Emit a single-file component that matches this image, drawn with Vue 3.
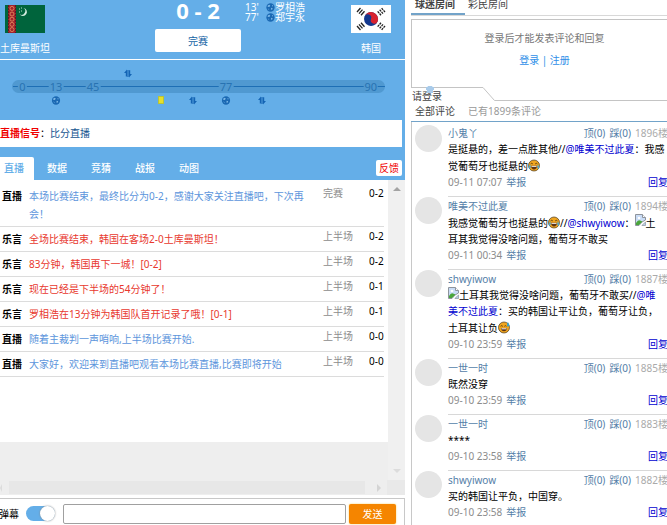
<script setup>
import { ref } from 'vue'

const danmaku = ref(true)
const message = ref('')

const scorers = [
  { minute: "13'", name: '罗相浩' },
  { minute: "77'", name: '郑宇永' }
]

// Positions are percentages along the match bar.
const marks = [
  { label: '0', at: 2.8 },
  { label: '13', at: 11.8 },
  { label: '45', at: 21.7 },
  { label: '77', at: 57.4 },
  { label: '90', at: 96.2 }
]
const events = [
  { type: 'sub', at: 31.1, side: 'above' },
  { type: 'goal', at: 11.9, side: 'below' },
  { type: 'card', at: 40, side: 'below' },
  { type: 'sub', at: 48.4, side: 'below' },
  { type: 'goal', at: 57.4, side: 'below' },
  { type: 'sub', at: 67, side: 'below' }
]

const tabs = ['直播', '数据', '竞猜', '战报', '动图']

const feed = [
  { who: '直播', text: '本场比赛结束，最终比分为0-2，感谢大家关注直播吧，下次再会！', phase: '完赛', score: '0-2', tone: 'blue' },
  { who: '乐言', text: '全场比赛结束，韩国在客场2-0土库曼斯坦！', phase: '上半场', score: '0-2', tone: 'red' },
  { who: '乐言', text: '83分钟，韩国再下一城！[0-2]', phase: '上半场', score: '0-2', tone: 'red' },
  { who: '乐言', text: '现在已经是下半场的54分钟了！', phase: '上半场', score: '0-1', tone: 'red' },
  { who: '乐言', text: '罗相浩在13分钟为韩国队首开记录了哦！[0-1]', phase: '上半场', score: '0-1', tone: 'red' },
  { who: '直播', text: '随着主裁判一声哨响,上半场比赛开始.', phase: '上半场', score: '0-0', tone: 'blue' },
  { who: '直播', text: '大家好，欢迎来到直播吧观看本场比赛直播,比赛即将开始', phase: '上半场', score: '0-0', tone: 'blue' }
]

const comments = [
  {
    user: '小鬼丫', floor: '1896楼', time: '09-11 07:07',
    lines: [
      [{ t: '是挺悬的，差一点胜其他//' }, { at: '@唯美不过此夏' }, { t: '：我感' }],
      [{ t: '觉葡萄牙也挺悬的' }, { icon: 'joy' }]
    ]
  },
  {
    user: '唯美不过此夏', floor: '1894楼', time: '09-11 00:34',
    lines: [
      [{ t: '我感觉葡萄牙也挺悬的' }, { icon: 'joy' }, { t: '//' }, { at: '@shwyiwow' }, { t: '：' }, { icon: 'broken' }, { t: '土' }],
      [{ t: '耳其我觉得没啥问题，葡萄牙不敢买' }]
    ]
  },
  {
    user: 'shwyiwow', floor: '1887楼', time: '09-10 23:59',
    lines: [
      [{ icon: 'broken' }, { t: '土耳其我觉得没啥问题，葡萄牙不敢买//' }, { at: '@唯' }],
      [{ at: '美不过此夏' }, { t: '：买的韩国让平让负，葡萄牙让负，' }],
      [{ t: '土耳其让负' }, { icon: 'sweat' }]
    ]
  },
  { user: '一世一时', floor: '1885楼', time: '09-10 23:59', lines: [[{ t: '既然没穿' }]] },
  { user: '一世一时', floor: '1883楼', time: '09-10 23:58', lines: [[{ t: '****' }]] },
  { user: 'shwyiwow', floor: '1882楼', time: '09-10 23:58', lines: [[{ t: '买的韩国让平负，中国穿。' }]] }
]
</script>

<template>
  <div class="page">
    <svg class="defs" aria-hidden="true">
      <symbol id="ball" viewBox="0 0 10 10">
        <circle cx="5" cy="5" r="4.6" fill="#1b69b3" />
        <path d="M2 2.8 3.8 2 4.8 3 3.6 4.4 1.8 4.2ZM6.6 2 8.2 3.4 7 4ZM5.8 5.2 7.4 5.8 6.8 7.4 5.4 7.2ZM2 6 3.2 6.6 3.6 8Z" fill="#7db9e8" />
      </symbol>
      <symbol id="swap" viewBox="0 0 8 9">
        <path d="M0 4 3 .6V7.6H1.8V4ZM8 5 5 8.4V1.2H6.2V5Z" fill="#1464b4" />
        <path d="M3.5 1V8M4.5 1V8" stroke="#1464b4" stroke-width=".6" />
      </symbol>
      <symbol id="joy" viewBox="0 0 12 12">
        <circle cx="6" cy="6" r="5.5" fill="#f0a51e" stroke="#4a3a20" stroke-width=".7" />
        <path d="M2.6 4.4Q3.6 3.2 4.8 4.4M7.2 4.4Q8.4 3.2 9.4 4.4" stroke="#3b2a15" stroke-width=".8" fill="none" />
        <path d="M3 6.2H9Q8.6 10 6 10 3.4 10 3 6.2Z" fill="#5b3316" />
        <path d="M3.5 6.4H8.5V7.3H3.5Z" fill="#fff" />
        <path d="M2.2 4.8Q.2 7 .8 9 2.4 9.8 2.8 7.6ZM9.8 4.8Q11.8 7 11.2 9 9.6 9.8 9.2 7.6Z" fill="#4ca5c8" />
      </symbol>
      <symbol id="sweat" viewBox="0 0 12 12">
        <circle cx="6" cy="6" r="5.5" fill="#f0a51e" stroke="#4a3a20" stroke-width=".7" />
        <path d="M2.6 4.8Q3.6 3.6 4.8 4.8M6.4 4.8Q7.6 3.6 8.4 4.8" stroke="#3b2a15" stroke-width=".8" fill="none" />
        <path d="M3 6.6H9Q8.6 9.8 6 9.8 3.4 9.8 3 6.6Z" fill="#5b3316" />
        <path d="M3.5 6.8H8.5V7.8H3.5Z" fill="#fff" />
        <path d="M9.8.6Q12 3.4 11.2 4.6 10 5.6 9 4.4 8.6 3 9.8.6Z" fill="#35a3c9" />
      </symbol>
      <symbol id="broken" viewBox="0 0 11 12">
        <path d="M.5.5H7.5L10.5 3.5V6L7 8 4 11.5H.5Z" fill="#c9dcf6" stroke="#8e949c" />
        <path d="M1 9Q3 5.5 5 6.5L7.4 7.6 4 11H1Z" fill="#4ba63b" />
        <circle cx="4" cy="4" r="1.3" fill="#fff" />
        <path d="M7.5.5V3.5H10.5" fill="#fff" stroke="#8e949c" />
        <path d="M10.5 8V11.5H6.8Z" fill="#b9cfe8" stroke="#8e949c" stroke-width=".7" />
      </symbol>
    </svg>

    <main class="match">
      <header class="scoreboard">
        <div class="team">
          <svg class="flag" viewBox="0 0 40 28" role="img" aria-label="土库曼斯坦">
            <rect width="40" height="28" fill="#00643c" />
            <rect x="3" width="8" height="28" fill="#a3222c" />
            <g fill="none" stroke="#e08a5a" stroke-width=".9">
              <circle cx="7" cy="3.4" r="2" /><circle cx="7" cy="9" r="2" /><circle cx="7" cy="14.2" r="2" />
              <circle cx="7" cy="19.4" r="2" /><circle cx="7" cy="24.6" r="2" />
            </g>
            <path d="M3.5 0V28M10.5 0V28" stroke="#5e1a20" stroke-dasharray="2 1" />
            <path d="M18.5 3A4 4 0 1 1 14.6 9.2 3.6 3.6 0 0 0 18.5 3Z" fill="#d8eee2" />
            <path d="M14 4h1M16 3h1M14 7h1M16 6h1" stroke="#b8dcc8" />
          </svg>
          <span>土库曼斯坦</span>
        </div>
        <div class="result">
          <strong>0 - 2</strong>
          <button type="button">完赛</button>
        </div>
        <ul class="scorers">
          <li v-for="s in scorers" :key="s.minute">
            <span class="minute">{{ s.minute }}</span>
            <svg class="mini"><use href="#ball" /></svg>{{ s.name }}
          </li>
        </ul>
        <div class="team">
          <svg class="flag" viewBox="0 0 40 28" role="img" aria-label="韩国">
            <rect width="40" height="28" fill="#fff" />
            <g transform="rotate(20 20 14)">
              <circle cx="20" cy="14" r="7" fill="#14388e" />
              <path d="M13 14A7 7 0 0 1 27 14 3.5 3.5 0 0 1 20 14 3.5 3.5 0 0 0 13 14Z" fill="#d8222f" />
            </g>
            <g stroke="#222" stroke-width="1.3">
              <path d="M6 7 9.5 3M8 8.6 11.5 4.6M10 10.2 13.5 6.2" />
              <path d="M34 7 30.5 3M32 8.6 28.5 4.6M30 10.2 26.5 6.2" stroke-dasharray="2.2 .7" />
              <path d="M6 21 9.5 25M8 19.4 11.5 23.4M10 17.8 13.5 21.8" />
              <path d="M34 21 30.5 25M32 19.4 28.5 23.4M30 17.8 26.5 21.8" stroke-dasharray="2.2 .7" />
            </g>
          </svg>
          <span>韩国</span>
        </div>
      </header>

      <section class="timeline" aria-label="比赛进程">
        <div class="track">
          <span v-for="m in marks" :key="m.label" class="mark" :style="{ left: m.at + '%' }">{{ m.label }}</span>
          <span v-for="e in events" :key="e.at" class="event" :class="[e.type, e.side]" :style="{ left: e.at + '%' }">
            <svg v-if="e.type === 'goal'"><use href="#ball" /></svg>
            <svg v-if="e.type === 'sub'"><use href="#swap" /></svg>
          </span>
        </div>
      </section>

      <p class="signal"><b>直播信号</b>：<a href="#">比分直播</a></p>

      <nav class="tabs">
        <a v-for="(tab, i) in tabs" :key="tab" href="#" :class="{ active: i === 0 }">{{ tab }}</a>
        <button type="button">反馈</button>
      </nav>

      <div class="feed">
        <ul>
          <li v-for="(row, i) in feed" :key="i">
            <b>{{ row.who }}</b>
            <span class="text" :class="row.tone">{{ row.text }}</span>
            <span class="phase">{{ row.phase }}</span>
            <span class="score">{{ row.score }}</span>
          </li>
        </ul>
        <div class="vbar"><i class="up"></i><i class="down"></i></div>
        <div class="blank"></div>
      </div>
      <div class="hbar"><i class="left"></i><span class="thumb"></span><i class="right"></i><span class="corner"></span></div>

      <form class="composer" @submit.prevent>
        <label for="danmaku">弹幕</label>
        <input id="danmaku" v-model="danmaku" type="checkbox" class="toggle" />
        <input v-model="message" type="text" class="message" aria-label="弹幕内容" />
        <button type="submit">发送</button>
      </form>
    </main>

    <aside class="room">
      <nav class="rooms">
        <a href="#" class="active">球迷房间</a>
        <a href="#">彩民房间</a>
      </nav>
      <div class="login">
        <p>登录后才能发表评论和回复</p>
        <p class="links"><a href="#">登录</a> | <a href="#">注册</a></p>
      </div>
      <div class="notch">
        <span class="please">请登录</span>
        <svg class="person" viewBox="0 0 8 8"><path d="M2 0H6L6.6 1H8V4H7V7H1V4H0V1H1.4Z" fill="#a9cbea" /></svg>
        <svg class="slope" viewBox="0 0 12 14"><path d="M0 .5 11.5 13.5H12" fill="none" stroke="#c4c4c4" /></svg>
        <span class="rest"></span>
      </div>
      <div class="filter"><b>全部评论</b><span>已有1899条评论</span></div>
      <div class="comments">
        <article v-for="(c, i) in comments" :key="i">
          <span class="avatar"></span>
          <div class="body">
            <div class="line">
              <a href="#" class="user">{{ c.user }}</a>
              <span class="votes"><a href="#">顶(0)</a><a href="#">踩(0)</a>{{ c.floor }}</span>
            </div>
            <p v-for="(line, n) in c.lines" :key="n">
              <template v-for="(p, k) in line" :key="k">
                <a v-if="p.at" href="#" class="mention">{{ p.at }}</a>
                <svg v-else-if="p.icon" :class="p.icon"><use :href="'#' + p.icon" /></svg>
                <template v-else>{{ p.t }}</template>
              </template>
            </p>
            <div class="line">
              <span class="time">{{ c.time }}<a href="#">举报</a></span>
              <a href="#" class="reply">回复</a>
            </div>
          </div>
        </article>
      </div>
    </aside>
  </div>
</template>

<style>
body {
  background: #fff;
}
</style>

<style scoped>
.page {
  display: grid;
  grid-template-columns: 405fr 256fr;
  column-gap: 6px;
  min-height: 100vh;
  overflow: hidden;
  font: 10px/16px "Noto Sans", "Noto Sans CJK SC", sans-serif;
  color: #000;
}
.page * {
  box-sizing: border-box;
}
.defs {
  position: absolute;
  width: 0;
  height: 0;
}
a {
  color: inherit;
  text-decoration: none;
}
p, ul {
  margin: 0;
  padding: 0;
  list-style: none;
}
button, input {
  font: inherit;
  margin: 0;
}
button {
  border: 0;
  padding: 0;
  cursor: pointer;
}
.match {
  display: flex;
  flex-direction: column;
  min-width: 0;
}

/* Scoreboard */
.scoreboard {
  display: grid;
  grid-template-columns: 50px 105fr 86px 96fr 68px;
  height: 60px;
  background: #64aee8;
  border-bottom: 1px solid #fff;
  color: #fff;
}
.team {
  display: flex;
  flex-direction: column;
  align-items: center;
  gap: 7px;
  padding-top: 5px;
  white-space: nowrap;
}
.team:last-child {
  grid-column: 5;
}
.flag {
  width: 40px;
  height: 28px;
}
.result {
  grid-column: 3;
  text-align: center;
}
.result strong {
  display: block;
  height: 29px;
  font: bold 22px/20px "Open Sans", "Noto Sans", sans-serif;
}
.result button {
  width: 100%;
  height: 23px;
  border-radius: 2px;
  background: #fff;
  color: #1464a5;
}
.scorers {
  grid-column: 4;
  padding: 2px 0 0 4px;
}
.scorers li {
  display: flex;
  align-items: center;
  height: 10px;
  line-height: 10px;
  white-space: nowrap;
}
.minute {
  width: 21px;
}
.mini {
  width: 9px;
  height: 9px;
}

/* Match bar */
.timeline {
  padding: 20px 20px 27px 12px;
  background: #64aee8;
}
.track {
  position: relative;
  height: 13px;
  border-radius: 7px;
  background: linear-gradient(#1e6fb5, #1e6fb5) 1px 6px / 100% 1px no-repeat #5099d1;
}
.mark, .event {
  position: absolute;
  transform: translateX(-50%);
}
.mark {
  top: 0;
  padding: 0 1px;
  background: #5099d1;
  color: #2873b2;
  font-size: 11px;
  line-height: 13px;
}
.event {
  display: flex;
}
.event svg {
  width: 9px;
  height: 9px;
}
.event.above {
  top: -11px;
}
.event.below {
  top: 16px;
}
.event.card {
  width: 6px;
  height: 8px;
  border: 1px solid #b9c438;
  background: #e6e02c;
}

.signal {
  border-right: 3px solid #64aee8;
  padding: 5px 0 6px;
  background: #fff;
}
.signal b {
  color: #f00000;
}
.signal a {
  color: #15548f;
}

/* Tabs */
.tabs {
  display: flex;
  align-items: flex-end;
  padding: 10px 3px 0 0;
  background: #64aee8;
  color: #fff;
}
.tabs a {
  width: 44px;
  height: 23px;
  padding-left: 13px;
  font-weight: 500;
  line-height: 23px;
}
.tabs .active {
  width: 34px;
  padding-left: 4px;
  border-radius: 0 2px 0 0;
  background: #fff;
  color: #64aee8;
}
.tabs button {
  width: 26px;
  height: 16px;
  margin: 0 0 4px auto;
  border-radius: 2px;
  background: #fff;
  color: #f00000;
}

/* Live feed */
.feed {
  flex: 1;
  display: grid;
  grid-template-columns: 1fr 17px;
  grid-template-rows: 1fr 38px;
}
.feed ul {
  padding: 4px 4px 0 0;
}
.feed li {
  display: grid;
  grid-template-columns: 29px 1fr 46px 15px;
  padding: 3px 0;
  border-bottom: 1px solid #dcdcdc;
  line-height: 18px;
}
.feed b {
  padding-left: 2px;
}
.text {
  padding-right: 12px;
}
.blue {
  color: #5c95dc;
}
.red {
  color: #e8382e;
}
.phase, .score {
  line-height: 12px;
  white-space: nowrap;
}
.phase {
  color: #8c8c8c;
}
.vbar {
  grid-column: 2;
  grid-row: 1 / 3;
  display: flex;
  flex-direction: column;
  justify-content: space-between;
  align-items: center;
  padding: 7px 0;
  background: #f0f0f0;
}
.blank {
  grid-column: 1;
  grid-row: 2;
  background: #eee;
}
.vbar i, .hbar i {
  border: 4px solid transparent;
}
.vbar .up {
  border-top: 0;
  border-bottom-color: #a3a3a3;
}
.vbar .down {
  border-bottom: 0;
  border-top-color: #dcdcdc;
}
.hbar {
  display: flex;
  align-items: center;
  height: 15px;
  background: #eee;
}
.thumb {
  flex: 1;
  height: 13px;
  margin: 0 12px 0 7px;
  background: #e7e7e7;
}
.hbar .left {
  border-left: 0;
  border-width: 4px 2px 4px 0;
  border-right-color: #dcdcdc;
}
.hbar .right {
  border-right: 0;
  border-left-color: #d4d4d4;
}
.corner {
  width: 18px;
  height: 15px;
  margin-left: 6px;
  background: #e9e9e9;
}

/* Composer */
.composer {
  display: flex;
  align-items: center;
  height: 28px;
  margin-top: 3px;
  padding: 4px 8px 2px 0;
  border: solid #c8c8c8;
  border-width: 1px 1px 0 0;
}
.composer label {
  width: 26px;
  text-indent: -1px;
  white-space: nowrap;
}
.toggle {
  appearance: none;
  width: 29px;
  height: 15px;
  border-radius: 8px;
  background: #ccc;
}
.toggle::before {
  content: "";
  display: block;
  width: 15px;
  height: 15px;
  border-radius: 50%;
  background: #fff;
  box-shadow: 0 0 2px #888;
}
.toggle:checked {
  background: #64aee8;
}
.toggle:checked::before {
  margin-left: auto;
}
.message {
  flex: 1;
  min-width: 0;
  height: 20px;
  margin: 0 3px 0 8px;
  border: 1px solid #a0a0a0;
  border-radius: 2px;
  background: #fff;
}
.composer button {
  width: 47px;
  height: 20px;
  border-radius: 2px;
  background: #f58500;
  box-shadow: 0 0 2px #f5d060;
  color: #fff;
}

/* Chat room */
.room {
  display: flex;
  flex-direction: column;
  min-width: 0;
}
.rooms {
  display: flex;
  height: 16px;
  border-bottom: 1px solid #d8d8d8;
  color: #444;
  line-height: 8px;
}
.rooms a {
  height: 15px;
  padding: 0 3px;
}
.rooms .active {
  width: 54px;
  padding: 0 4px;
  border-bottom: 2px solid #72a3c9;
  font-weight: bold;
}
.login {
  height: 68px;
  margin-top: 3px;
  padding: 10px 0 0 10px;
  border: solid #c4c4c4;
  border-width: 1px 0 0 1px;
  color: #777;
  text-align: center;
}
.links {
  margin-top: 6px;
  color: #2f8fe8;
}
.notch {
  position: relative;
  display: grid;
  grid-template-columns: 72px 12px 1fr;
  grid-template-rows: 14px;
}
.please {
  padding: 1px 0 0 1px;
  border-top: 1px solid #c4c4c4;
  color: #444;
  line-height: 14px;
}
.person {
  position: absolute;
  left: 15px;
  top: -1px;
  width: 8px;
  height: 8px;
}
.slope {
  width: 12px;
  height: 14px;
}
.rest {
  border-bottom: 1px solid #c4c4c4;
}
.filter {
  display: flex;
  gap: 13px;
  height: 21px;
  padding: 2px 4px 0;
  border-bottom: 1px solid #72a3c9;
  color: #999;
}
.filter b {
  color: #444;
  font-weight: normal;
}
.comments {
  flex: 1;
  margin-right: -1px;
  padding: 2px 0 0 3px;
  border-left: 1px solid #c8c8c8;
}
article {
  display: grid;
  grid-template-columns: 27px 1fr;
  column-gap: 6px;
}
.avatar {
  width: 27px;
  height: 27px;
  margin-top: 1px;
  border-radius: 50%;
  background: #e5e5e5;
}
.body {
  min-width: 0;
  padding: 1px 0 6px;
}
article + article .body {
  border-top: 1px solid #d8d8d8;
}
.body p {
  display: flex;
  align-items: center;
  min-height: 16px;
  white-space: nowrap;
}
.body svg {
  width: 12px;
  height: 13px;
  margin: 2px 0;
}
.body .broken {
  width: 11px;
  height: 12px;
  margin: 0;
  align-self: flex-start;
}
.line {
  display: flex;
  justify-content: space-between;
  white-space: nowrap;
}
.user, .line a {
  color: #5480a8;
}
.mention, .line .reply {
  color: #0000d0;
}
.votes {
  color: #aaa;
}
.votes a {
  margin-right: 4px;
}
.time {
  color: #8c8c8c;
}
.time a {
  margin-left: 4px;
}
</style>
